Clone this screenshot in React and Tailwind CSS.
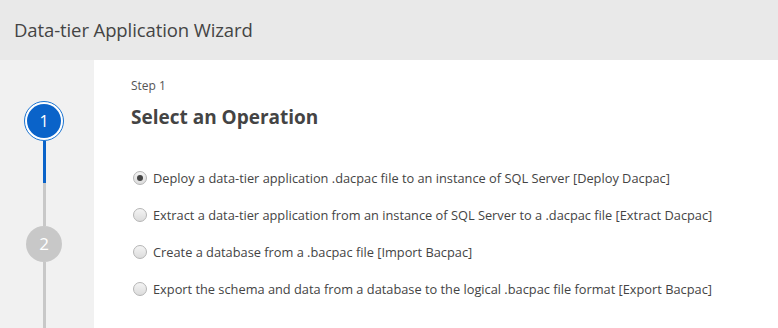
const OPTIONS = [
  'Deploy a data-tier application .dacpac file to an instance of SQL Server [Deploy Dacpac]',
  'Extract a data-tier application from an instance of SQL Server to a .dacpac file [Extract Dacpac]',
  'Create a database from a .bacpac file [Import Bacpac]',
  'Export the schema and data from a database to the logical .bacpac file format [Export Bacpac]',
];

function Radio({ checked }) {
  return (
    <span className="w-[14px] h-[14px] rounded-full border border-[#b5b5b5] bg-gradient-to-b from-[#f4f4f4] to-[#dcdcdc] flex items-center justify-center shrink-0">
      {checked && <span className="w-[6px] h-[6px] rounded-full bg-[#444]" />}
    </span>
  );
}

export default function App() {
  return (
    <div className="w-[778px] h-[328px] flex flex-col overflow-hidden font-['Open_Sans','Noto_Sans',sans-serif] text-[#444]">
      <div className="h-[60px] bg-[#e9e9e9] flex items-center px-[14px] shrink-0">
        <h1 className="text-[18.5px] text-[#444] tracking-[-0.1px]">Data-tier Application Wizard</h1>
      </div>
      <div className="flex flex-1 min-h-0">
        <div className="w-[94px] bg-[#f1f1f1] shrink-0">
          <div className="ml-[24px] w-[40px] h-full flex flex-col items-center pt-[41px]">
            <div className="w-[40px] h-[40px] rounded-full border-[1.5px] border-[#1a73d1] p-[2px] bg-white shrink-0">
              <div className="w-full h-full rounded-full bg-[#0a63c9] flex items-center justify-center text-white text-[16px]">1</div>
            </div>
            <div className="w-[3px] h-[42px] bg-[#0a63c9]" />
            <div className="w-[3px] h-[43px] bg-[#c8c8c8]" />
            <div className="w-[36px] h-[36px] rounded-full bg-[#c8c8c8] flex items-center justify-center text-white text-[17px] shrink-0">2</div>
            <div className="w-[3px] flex-1 bg-[#c8c8c8]" />
          </div>
        </div>
        <div className="flex-1 bg-white pl-[37px] pt-[17px]">
          <div className="text-[12px] text-[#555] leading-[18px]">Step 1</div>
          <h2 className="text-[19px] font-bold text-[#444] mt-[9px] leading-[26px]">Select an Operation</h2>
          <div className="flex flex-col gap-[15px] mt-[37px]">
            {OPTIONS.map((o, i) => (
              <label key={o} className="flex items-center gap-[6px] pl-[2px] text-[12.8px] text-[#444] leading-[22px]">
                <Radio checked={i === 0} />
                <span>{o}</span>
              </label>
            ))}
          </div>
        </div>
      </div>
    </div>
  );
}
